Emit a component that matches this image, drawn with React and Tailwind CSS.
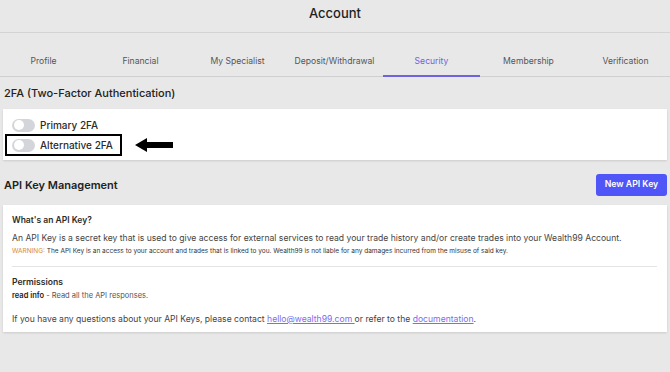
export default function App() {
  const tabs = ["Profile", "Financial", "My Specialist", "Deposit/Withdrawal", "Security", "Membership", "Verification"];
  return (
    <div className="w-[670px] h-[372px] overflow-hidden bg-[#e8e8e9] text-[#222]" style={{ fontFamily: "Inter, 'Noto Sans', sans-serif" }}>
      <div className="h-[33px] pb-[4px] flex items-center justify-center border-b border-[#d4d4d6] text-[13px] font-medium text-[#1f1f1f]">Account</div>
      <div className="h-[44px] border-b border-[#cfcfd2] flex -ml-[5px]">
        {tabs.map((t) => (
          <div key={t} className={`w-[97px] shrink-0 flex items-center justify-center text-[8.6px] pt-[14px] ${t === "Security" ? "text-[#6d63e0] border-b-2 border-[#6d63e0] -mb-px" : "text-[#555]"}`}>{t}</div>
        ))}
      </div>
      <div className="px-[3px]">
        <div className="pl-[1px] pt-[8px] h-[32px] text-[11px] font-medium text-[#222]">2FA (Two-Factor Authentication)</div>
        <div className="bg-white h-[51px] shadow-[0_1px_2px_rgba(0,0,0,0.12)] pt-[8px] pl-[2px] flex flex-col">
          <div className="flex items-center h-[16px] pl-[7px] gap-[5px]">
            <span className="w-[23px] h-[13px] rounded-full bg-[#d3d5da] relative"><span className="absolute left-[1.5px] top-[1.5px] w-[10px] h-[10px] rounded-full bg-white" /></span>
            <span className="text-[10px] font-medium text-[#2b2b2b]">Primary 2FA</span>
          </div>
          <div className="flex items-center gap-[13px] mt-[1px]">
            <div className="flex items-center h-[22px] w-[117px] border-2 border-black pl-[5px] gap-[5px]">
              <span className="w-[23px] h-[13px] rounded-full bg-[#d3d5da] relative"><span className="absolute left-[1.5px] top-[1.5px] w-[10px] h-[10px] rounded-full bg-white" /></span>
              <span className="text-[10px] font-medium text-[#2b2b2b]">Alternative 2FA</span>
            </div>
            <svg width="38" height="14" viewBox="0 0 38 14"><polygon points="0,7 12,0 12,4 38,4 38,10 12,10 12,14" fill="#000" /></svg>
          </div>
        </div>
        <div className="flex items-center justify-between h-[45px] pt-[5px]">
          <div className="pl-[1px] text-[11px] font-semibold text-[#222]">API Key Management</div>
          <button className="h-[22px] w-[71px] rounded-[3px] bg-[#4f55f6] text-white text-[8.7px] font-semibold">New API Key</button>
        </div>
        <div className="bg-white h-[127px] shadow-[0_1px_2px_rgba(0,0,0,0.12)] px-[9px] pt-[8px]">
          <div className="text-[8.5px] font-semibold text-[#2b2b2b] leading-[14px]">What's an API Key?</div>
          <div className="text-[8.6px] text-[#444] mt-[4px] leading-[14px] whitespace-nowrap">An API Key is a secret key that is used to give access for external services to read your trade history and/or create trades into your Wealth99 Account.</div>
          <div className="text-[6.5px] text-[#333] leading-[10px] mt-[1px] whitespace-nowrap"><span className="text-[#d98a3a]">WARNING:</span> The API Key is an access to your account and trades that is linked to you. Wealth99 is not liable for any damages incurred from the misuse of said key.</div>
          <div className="border-t border-[#e4e4e6] mt-[10px] mr-[1px]" />
          <div className="text-[8.6px] font-semibold text-[#2b2b2b] mt-[8px] leading-[14px]">Permissions</div>
          <div className="text-[7.5px] text-[#555] leading-[12px] mt-[1px]"><span className="font-semibold text-[#222]">read info</span> - Read all the API responses.</div>
          <div className="text-[8.6px] text-[#444] leading-[14px] mt-[10px] whitespace-nowrap">If you have any questions about your API Keys, please contact <span className="text-[#7b6cf0] underline">hello@wealth99.com </span>or refer to the <span className="text-[#7b6cf0] underline">documentation</span>.</div>
        </div>
      </div>
    </div>
  );
}
